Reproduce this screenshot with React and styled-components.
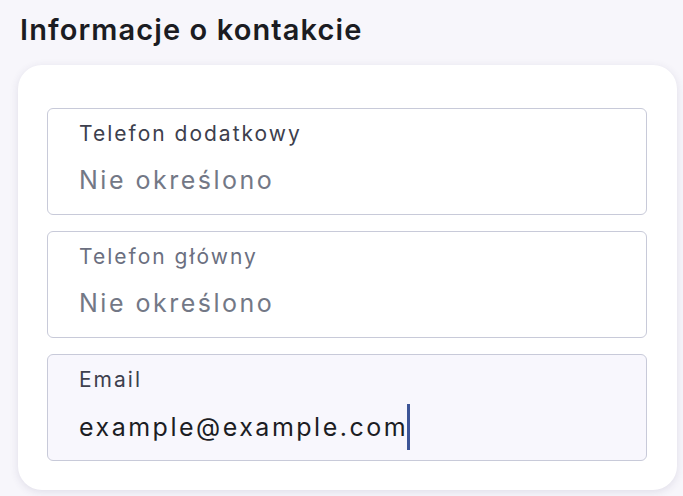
import React from 'react';
import styled, { createGlobalStyle } from 'styled-components';

const GlobalStyle = createGlobalStyle`
    html, body {
        margin: 0;
        padding: 0;
        background: #f7f6fb;
        font-family: Inter, "Noto Sans", sans-serif;
    }
`;

const Page = styled.div`
    padding: 12px 6px 5px 18px;
    box-sizing: border-box;
    width: 683px;
    height: 496px;
`;

const Title = styled.h2`
    margin: 0 0 17px 2px;
    font-size: 29px;
    line-height: 36px;
    font-weight: 600;
    color: #1b1c22;
    letter-spacing: 1.1px;
`;

const Card = styled.section`
    background: #fff;
    border-radius: 24px;
    box-shadow: 0 2px 8px rgba(60, 50, 100, 0.12);
    padding: 43px 30px 29px 29px;
    display: flex;
    flex-direction: column;
    gap: 16px;
`;

const Field = styled.label`
    display: flex;
    flex-direction: column;
    gap: 11px;
    height: 107px;
    box-sizing: border-box;
    padding: 12px 31px 0;
    border: 1.5px solid #c8cad9;
    border-radius: 6px;
    background: ${p => (p.$active ? '#f8f7fd' : '#fff')};
`;

const Label = styled.span`
    font-size: 21px;
    line-height: 26px;
    color: ${p => (p.$muted ? '#6b6f80' : '#3d404d')};
    letter-spacing: 2px;
`;

const Value = styled.span`
    font-size: 25px;
    line-height: 44px;
    color: ${p => (p.$empty ? '#737886' : '#1c1d24')};
    letter-spacing: 2.5px;
    display: flex;
    align-items: center;
`;

const Caret = styled.span`
    display: inline-block;
    width: 3px;
    height: 46px;
    margin-left: -1px;
    background: #3d5597;
`;

const fields = [
    { label: 'Telefon dodatkowy', value: 'Nie określono', empty: true },
    { label: 'Telefon główny', value: 'Nie określono', empty: true, muted: true },
    { label: 'Email', value: 'example@example.com', active: true },
];

function App() {
    return (
        <Page>
            <GlobalStyle />
            <Title>Informacje o kontakcie</Title>
            <Card>
                {fields.map(f => (
                    <Field key={f.label} $active={f.active}>
                        <Label $muted={f.muted}>{f.label}</Label>
                        <Value $empty={f.empty}>
                            {f.value}
                            {f.active && <Caret />}
                        </Value>
                    </Field>
                ))}
            </Card>
        </Page>
    );
}

export default App;
